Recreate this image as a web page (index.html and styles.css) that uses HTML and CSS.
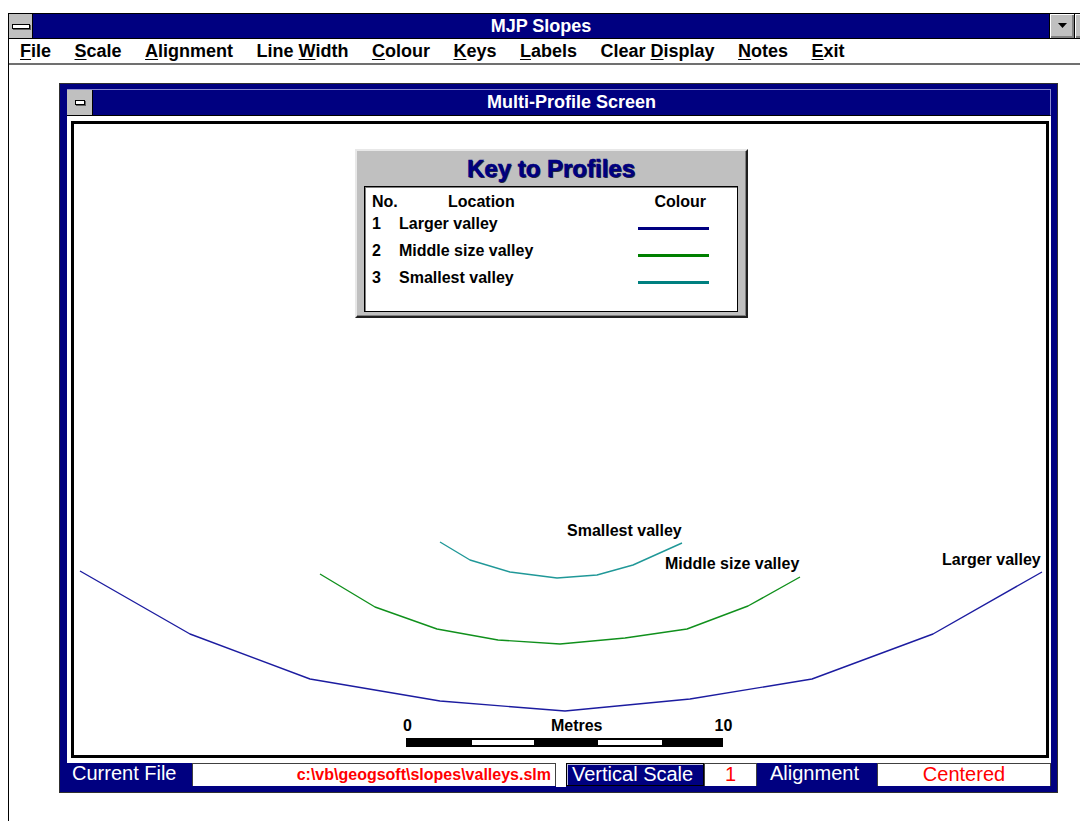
FILE: index.html
```html
<!DOCTYPE html>
<html lang="en">
<head>
<meta charset="utf-8">
<title>MJP Slopes</title>
<link rel="stylesheet" href="styles.css">
</head>
<body>
<div class="caption"><div class="caption-text">Screen display of three main slopes</div></div>

<div class="app">
  <div class="titlebar">
    <div class="sysbox"><span class="sysbar"></span></div>
    <div class="title">MJP Slopes</div>
    <div class="tbtn">
      <svg width="9" height="6" viewBox="0 0 9 6"><polygon points="0,0 9,0 4.5,5" fill="#000"/></svg>
    </div>
    <div class="tbtn">
      <svg width="9" height="14" viewBox="0 0 9 14"><polygon points="4.5,1 8,5 1,5" fill="#000"/><polygon points="1,9 8,9 4.5,13" fill="#000"/></svg>
    </div>
  </div>

  <nav class="menu">
    <span><u>F</u>ile</span>
    <span><u>S</u>cale</span>
    <span><u>A</u>lignment</span>
    <span>Line <u>W</u>idth</span>
    <span><u>C</u>olour</span>
    <span><u>K</u>eys</span>
    <span><u>L</u>abels</span>
    <span>Clear <u>D</u>isplay</span>
    <span><u>N</u>otes</span>
    <span><u>E</u>xit</span>
  </nav>

  <div class="workspace">
    <div class="mdi">
      <div class="mdi-title">
        <div class="mdi-sys"><span class="mdi-sysbar"></span></div>
        <div class="title">Multi-Profile Screen</div>
      </div>

      <div class="client">
        <div class="panel">
          <svg class="plot" width="971" height="631" viewBox="74 124 971 631">
            <polyline class="larger" points="80,571 190,634 310,679 440,701 565,711 690,699 812,679 933,634 1042,572"/>
            <polyline class="middle" points="320,574 375,607 437,629 498,640 560,644 625,638 687,629 748,606 800,577"/>
            <polyline class="smallest" points="440,542 470,560 510,572 557,578 597,575 633,565 682,543"/>
          </svg>

          <div class="key">
            <div class="key-title">Key to Profiles</div>
            <div class="key-body">
              <span class="kh">No.</span><span class="kh loc">Location</span><span class="kh col">Colour</span>
              <span>1</span><span>Larger valley</span><span class="swatch navy"></span>
              <span>2</span><span>Middle size valley</span><span class="swatch green"></span>
              <span>3</span><span>Smallest valley</span><span class="swatch teal"></span>
            </div>
          </div>

          <div class="plabel lbl-small">Smallest valley</div>
          <div class="plabel lbl-middle">Middle size valley</div>
          <div class="plabel lbl-large">Larger valley</div>

          <div class="scale">
            <div class="scale-labels">
              <span>0</span><span class="metres">Metres</span><span class="ten">10</span>
            </div>
            <div class="scale-bar">
              <span class="seg dark w66"></span>
              <span class="seg light w62"></span>
              <span class="seg dark w64"></span>
              <span class="seg light w64"></span>
              <span class="seg dark w61"></span>
            </div>
          </div>
        </div>
      </div>

      <div class="status">
        <div class="st-label st-file">Current File</div>
        <div class="st-box st-path">c:\vb\geogsoft\slopes\valleys.slm</div>
        <div class="st-gap"></div>
        <div class="st-label st-vscale">Vertical Scale</div>
        <div class="st-box st-num">1</div>
        <div class="st-label st-align">Alignment</div>
        <div class="st-box st-center">Centered</div>
      </div>
    </div>
  </div>
</div>
</body>
</html>
```

FILE: styles.css
```css
body {
  margin: 0;
  width: 1080px;
  height: 821px;
  overflow: hidden;
  background: #fff;
  font-family: "Liberation Sans", Arial, sans-serif;
  color: #000;
}

/* heading line above the window, cut by the top edge */
.caption {
  height: 13px;
  overflow: hidden;
}
.caption-text {
  font-weight: bold;
  font-size: 27px;
  line-height: 27px;
  margin-top: -29px;
  padding-left: 266px;
  white-space: nowrap;
}

/* application window */
.app {
  margin-left: 8px;
  width: 1090px;
  height: 820px;
  border-left: 1px solid #000;
  border-top: 1px solid #000;
}

.titlebar {
  display: flex;
  height: 24px;
  background: #000080;
  border-bottom: 1px solid #000;
}
.sysbox {
  width: 23px;
  background: #c0c0c0;
  border-right: 1px solid #000;
  display: flex;
  align-items: center;
  justify-content: center;
}
.sysbar {
  width: 16px;
  height: 3px;
  background: #fff;
  border: 1px solid #000;
  box-shadow: 1px 1px 0 #606060;
}
.title {
  flex: 1;
  text-align: center;
  color: #fff;
  font-weight: bold;
  font-size: 18px;
  line-height: 24px;
  white-space: nowrap;
}
.tbtn {
  width: 24px;
  background: #c0c0c0;
  border-left: 1px solid #000;
  box-shadow: inset 1px 1px 0 #fff, inset -2px -2px 0 #808080;
  display: flex;
  align-items: center;
  justify-content: center;
}

.menu {
  display: flex;
  gap: 23.5px;
  padding-left: 11px;
  height: 24px;
  line-height: 24px;
  font-size: 18px;
  font-weight: bold;
  border-bottom: 2px solid #707070;
  white-space: nowrap;
}
.menu u {
  text-underline-offset: 2px;
}

/* document window */
.workspace {
  padding: 18px 0 0 50px;
}
.mdi {
  width: 999px;
  box-sizing: border-box;
  border: 1px solid #303030;
  background: #000080;
  padding: 5px 6px 6px 7px;
}
.mdi-title {
  display: flex;
  height: 25px;
  border-top: 1px solid #8888d0;
  border-right: 1px solid #8888d0;
  border-bottom: 1px solid #000;
}
.mdi-sys {
  width: 25px;
  background: #c0c0c0;
  border-right: 1px solid #000;
  display: flex;
  align-items: center;
  justify-content: center;
}
.mdi-sysbar {
  width: 8px;
  height: 3px;
  background: #fff;
  border: 1px solid #000;
  box-shadow: 1px 1px 0 #606060;
}

.client {
  background: #fff;
  padding: 5px 2px 5px 4px;
}
.panel {
  position: relative;
  height: 631px;
  border: 3px solid #000;
}
.plot {
  position: absolute;
  left: 0;
  top: 0;
}
.plot polyline {
  fill: none;
  stroke-width: 1.4;
  stroke-linejoin: round;
}
.plot .larger { stroke: #1c1ca0; }
.plot .middle { stroke: #10901c; }
.plot .smallest { stroke: #209898; }

/* key box */
.key {
  position: absolute;
  left: 281px;
  top: 25px;
  width: 393px;
  height: 169px;
  box-sizing: border-box;
  background: #c0c0c0;
  border-top: 2px solid #e8e8e8;
  border-left: 2px solid #e8e8e8;
  border-right: 2px solid #202020;
  border-bottom: 2px solid #202020;
  box-shadow: inset -1px -1px 0 #808080;
  padding: 0 8px 4px 7px;
}
.key-title {
  height: 35px;
  line-height: 36px;
  text-align: center;
  font-size: 24px;
  font-weight: bold;
  color: #000080;
  -webkit-text-stroke: 0.6px #000080;
  text-shadow: 1px 1px 0 #303030;
  white-space: nowrap;
}
.key-body {
  height: 126px;
  box-sizing: border-box;
  background: #fff;
  border: 1px solid #000;
  box-shadow: inset 1px 1px 0 #808080;
  padding: 6px 28px 0 7px;
  display: grid;
  grid-template-columns: 27px 1fr 71px;
  grid-template-rows: 18px 22px 27px 27px;
  align-items: end;
  font-size: 16px;
  font-weight: bold;
  line-height: 18px;
  white-space: nowrap;
}
.key-body .loc {
  padding-left: 49px;
}
.key-body .col {
  justify-self: end;
  margin-right: 3px;
}
.swatch {
  height: 3px;
  margin-bottom: 3px;
}
.swatch.navy { background: #000080; }
.swatch.green { background: #008000; }
.swatch.teal { background: #008080; }

/* curve labels */
.plabel {
  position: absolute;
  font-size: 16px;
  font-weight: bold;
  line-height: 18px;
  white-space: nowrap;
}
.lbl-small { left: 493px; top: 398px; }
.lbl-middle { left: 591px; top: 431px; }
.lbl-large { left: 868px; top: 427px; }

/* scale bar */
.scale {
  position: absolute;
  left: 329px;
  top: 593px;
  width: 410px;
}
.scale-labels {
  display: flex;
  height: 18px;
  line-height: 18px;
  font-size: 16px;
  font-weight: bold;
}
.scale-labels .metres { margin-left: 139px; }
.scale-labels .ten { margin-left: 112px; }
.scale-bar {
  display: flex;
  margin: 3px 0 0 3px;
  height: 9px;
}
.seg {
  box-sizing: border-box;
  height: 9px;
}
.seg.dark { background: #000; }
.seg.light {
  background: #fff;
  border-top: 2px solid #000;
  border-bottom: 2px solid #000;
}
.w66 { width: 66px; }
.w62 { width: 62px; }
.w64 { width: 64px; }
.w61 { width: 61px; }

/* status strip */
.status {
  display: flex;
  height: 24px;
  margin-top: -1px;
}
.st-label {
  box-sizing: border-box;
  color: #fff;
  font-size: 20px;
  line-height: 23px;
  white-space: nowrap;
}
.st-box {
  box-sizing: border-box;
  height: 23px;
  margin-top: 1px;
  background: #fff;
  border-top: 1px solid #404040;
  border-left: 1px solid #404040;
  border-right: 1px solid #404040;
  color: #ff0000;
  white-space: nowrap;
}
.st-file {
  width: 125px;
  padding-left: 5px;
}
.st-path {
  width: 364px;
  text-align: right;
  padding-right: 4px;
  font-size: 16px;
  font-weight: bold;
  line-height: 21px;
}
.st-gap {
  width: 10px;
  height: 25px;
  background: #fff;
}
.st-vscale {
  width: 138px;
  height: 23px;
  margin-top: 1px;
  padding-left: 5px;
  border: 1px solid #000;
  box-shadow: inset 1px 1px 0 #c0c0e0;
  line-height: 21px;
}
.st-num {
  width: 53px;
  text-align: center;
  font-size: 20px;
  line-height: 21px;
}
.st-align {
  width: 120px;
  padding-left: 13px;
}
.st-center {
  flex: 1;
  text-align: center;
  font-size: 20px;
  line-height: 21px;
}
```
